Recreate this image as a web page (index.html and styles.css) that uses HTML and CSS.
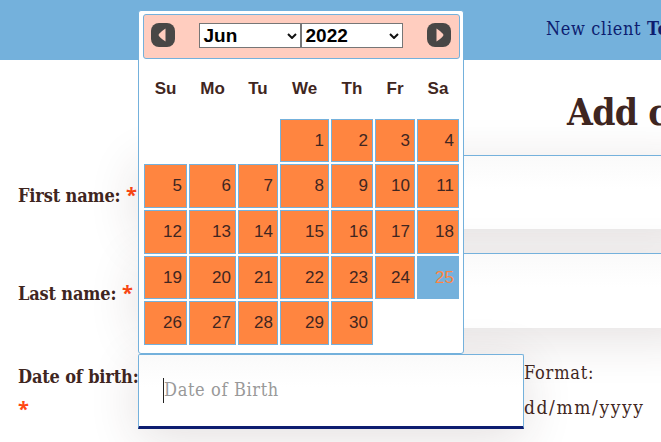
FILE: index.html
```html
<!DOCTYPE html>
<html lang="en">
<head>
<meta charset="utf-8">
<title>Add client</title>
<link rel="stylesheet" href="styles.css">
</head>
<body>
<header class="topbar"><span class="notice">New client <b>To</b></span></header>
<main>
  <h1>Add c</h1>
  <form>
    <div class="row">
      <label><span class="t-first">First name:</span> <i>*</i></label>
      <div class="field wide"></div>
    </div>
    <div class="row">
      <label><span class="t-last">Last name:</span> <i>*</i></label>
      <div class="field wide"></div>
    </div>
    <div class="row birth">
      <label><span class="t-birth">Date of birth:</span> <i>*</i></label>
      <div class="field date"><span class="caret"></span><span class="placeholder">Date of Birth</span></div>
      <div class="format"><span class="t-format">Format:</span><br><span class="t-pattern">dd/mm/yyyy</span></div>
    </div>
  </form>
</main>
<section class="picker">
  <div class="picker-head">
    <svg class="arrow" viewBox="0 0 24 24"><rect width="24" height="24" rx="8"/><path d="M14.5 5.5v13Q8 14 7.5 12Q8 10 14.5 5.5z"/></svg>
    <div class="selects">
      <div class="select month">Jun<svg viewBox="0 0 10 6"><path d="M1 1l4 4 4-4"/></svg></div>
      <div class="select year">2022<svg viewBox="0 0 10 6"><path d="M1 1l4 4 4-4"/></svg></div>
    </div>
    <svg class="arrow" viewBox="0 0 24 24"><rect width="24" height="24" rx="8"/><path d="M9.5 5.5v13Q16 14 16.5 12Q16 10 9.5 5.5z"/></svg>
  </div>
  <div class="weekdays"><b>Su</b><b>Mo</b><b>Tu</b><b>We</b><b>Th</b><b>Fr</b><b>Sa</b></div>
  <div class="days">
    <span class="first">1</span><span>2</span><span>3</span><span>4</span>
    <span>5</span><span>6</span><span>7</span><span>8</span><span>9</span><span>10</span><span>11</span>
    <span>12</span><span>13</span><span>14</span><span>15</span><span>16</span><span>17</span><span>18</span>
    <span>19</span><span>20</span><span>21</span><span>22</span><span>23</span><span>24</span><span class="today">25</span>
    <span>26</span><span>27</span><span>28</span><span>29</span><span>30</span>
  </div>
</section>
</body>
</html>
```
FILE: styles.css
```css
* { box-sizing: border-box; }
html, body { overflow: hidden; }
body {
  margin: 0;
  width: 661px;
  height: 442px;
  position: relative;
  background: #fff;
  color: #3f2621;
  font: 18px "DejaVu Serif Condensed", "DejaVu Serif", serif;
  font-stretch: condensed;
}
.topbar {
  height: 60px;
  background: #74b1dc;
  color: #0d1d70;
  padding: 17px 0 0 546px;
  line-height: 24px;
  white-space: nowrap;
}
.notice { letter-spacing: .65px; }
main { height: 382px; overflow: hidden; }
h1 {
  margin: 0;
  height: 95px;
  padding: 28px 0 0 567px;
  font-size: 37px;
  line-height: 48px;
  letter-spacing: -.7px;
  white-space: nowrap;
}
.row {
  display: grid;
  grid-template-columns: 120px 1fr;
  height: 74px;
  margin: 0 0 24px 18px;
}
.row + .row { height: 75px; margin-bottom: 26px; }
.row label {
  font-weight: bold;
  line-height: 36px;
  padding-top: 23px;
  white-space: nowrap;
}
.row i {
  color: #ff4713;
  font: bold 20px/1 "Open Sans", sans-serif;
  letter-spacing: 0;
}
.t-first, .t-last, .t-birth { letter-spacing: -.15px; }
.field {
  border: 1px solid #74b1dc;
  background: linear-gradient(#fafafa, #fff 45%);
  box-shadow: 0 10px 50px rgba(63, 38, 33, .14);
}
.wide { border-bottom: 0; width: 560px; }
.row.birth {
  grid-template-columns: 120px 386px 1fr;
  height: 75px;
  margin: 0 0 0 18px;
}
.birth label { padding-top: 6px; line-height: 33px; white-space: normal; }
.birth .t-birth { white-space: nowrap; }
.date {
  display: flex;
  align-items: center;
  padding-left: 24px;
  border-bottom: 3px solid #0d1d70;
  border-radius: 2px 2px 0 0;
}
.caret { width: 1px; height: 25px; background: #222; }
.placeholder { color: #999; margin-top: -3px; letter-spacing: .65px; }
.format { line-height: 35px; padding-top: 1px; white-space: nowrap; }
.t-format { letter-spacing: .8px; }
.t-pattern { font-size: 19px; letter-spacing: 1.6px; }
.picker {
  position: absolute;
  left: 138px;
  top: 10px;
  width: 326px;
  height: 344px;
  padding: 3px 3px 0 4px;
  border: 1px solid #74b1dc;
  border-radius: 3px;
  background: #fff;
  font: 17px "Liberation Sans", sans-serif;
}
.picker-head {
  display: flex;
  justify-content: space-between;
  align-items: flex-start;
  height: 45px;
  padding: 8px 8px 0 7px;
  border: 1px solid #74b1dc;
  border-radius: 3px;
  background: #ffcdbf;
}
.arrow { width: 24px; height: 24px; }
.arrow rect { fill: #484746; }
.arrow path { fill: #ffcdbf; }
.selects { display: flex; margin-right: 1px; }
.select {
  display: flex;
  align-items: center;
  justify-content: space-between;
  height: 25px;
  padding: 0 3px 0 4px;
  border: 1px solid #767676;
  background: #fff;
  color: #000;
  font-size: 19px;
  font-weight: bold;
}
.select svg { width: 10px; height: 6px; fill: none; stroke: #111; stroke-width: 2; }
.month { width: 102px; }
.year { width: 102px; }
.weekdays, .days {
  display: grid;
  grid-template-columns: 43px 47px 40px 49px 42px 40px 42px;
  column-gap: 2px;
  margin-left: 1px;
}
.weekdays { height: 60px; line-height: 59px; text-align: center; }
.days { grid-template-rows: 43px 44px 44px 43px 44px; row-gap: 2px; }
.days span {
  border: 1px solid #74b1dc;
  background: #ff8540;
  text-align: right;
  padding-right: 4px;
  line-height: 42px;
}
.days .first { grid-column: 4; }
.days .today { background: #74b1dc; color: #ff8540; }
```
